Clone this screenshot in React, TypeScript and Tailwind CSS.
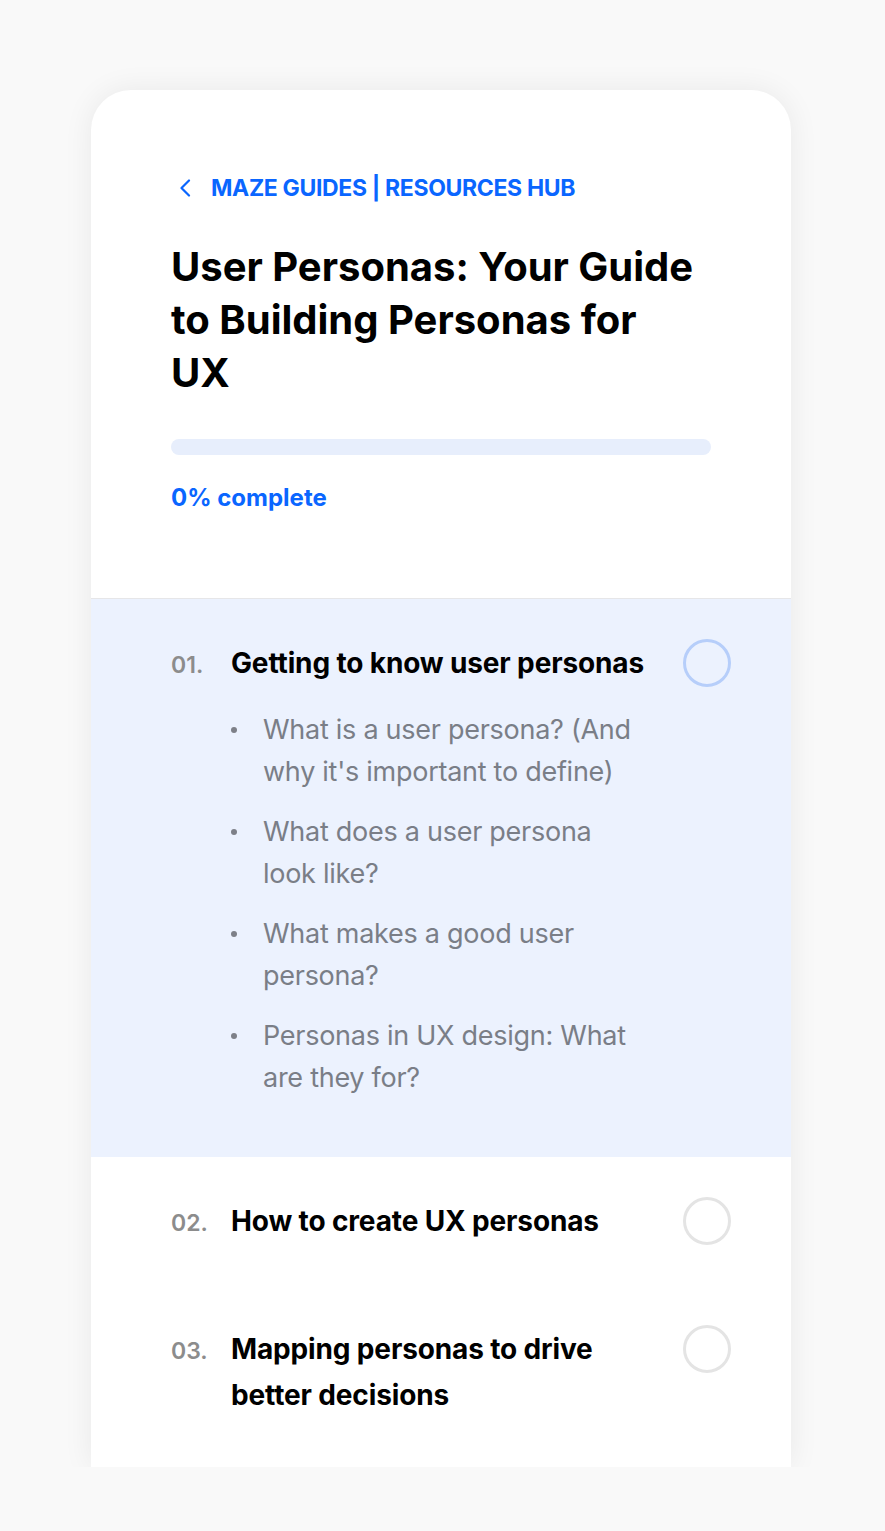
import React from "react";

type Chapter = {
  num: string;
  title: string[];
  active?: boolean;
  topics?: string[][];
};

const chapters: Chapter[] = [
  {
    num: "01.",
    title: ["Getting to know user personas"],
    active: true,
    topics: [
      ["What is a user persona? (And", "why it's important to define)"],
      ["What does a user persona", "look like?"],
      ["What makes a good user", "persona?"],
      ["Personas in UX design: What", "are they for?"],
    ],
  },
  { num: "02.", title: ["How to create UX personas"] },
  { num: "03.", title: ["Mapping personas to drive", "better decisions"] },
];

function ChapterRow({ chapter }: { chapter: Chapter }) {
  return (
    <div
      className={
        chapter.active
          ? "bg-[#ecf2fe] pb-[58px] pl-20 pr-[60px] pt-10"
          : "bg-white pb-10 pl-20 pr-[60px] pt-10"
      }
    >
      <div className="flex items-start">
        <div className="flex flex-1 items-baseline pt-[1px]">
          <span className="w-[60px] shrink-0 text-[23px] font-semibold text-[#8c8c8c]">{chapter.num}</span>
          <h3 className="whitespace-nowrap text-[28px] font-bold leading-[46px] tracking-[-0.005em] text-black">
            {chapter.title.map((line, i) => (
              <React.Fragment key={i}>
                {i > 0 && <br />}
                {line}
              </React.Fragment>
            ))}
          </h3>
        </div>
        <span
          className={
            chapter.active
              ? "h-12 w-12 shrink-0 rounded-full border-[3px] border-[#b6cefa]"
              : "h-12 w-12 shrink-0 rounded-full border-[3px] border-[#e4e4e4]"
          }
        />
      </div>
      {chapter.topics && (
        <ul className="ml-[60px] mt-[22px] flex flex-col gap-[18px]">
          {chapter.topics.map((t, i) => (
            <li key={i} className="flex">
              <span className="flex h-[42px] w-8 shrink-0 items-center">
                <span className="h-[6px] w-[6px] rounded-full bg-[#7d8088]" />
              </span>
              <span className="whitespace-nowrap text-[27px] leading-[42px] tracking-[-0.01em] text-[#7a7e87]">
                {t[0]}
                <br />
                {t[1]}
              </span>
            </li>
          ))}
        </ul>
      )}
    </div>
  );
}

export default function App() {
  return (
    <main className="min-h-screen bg-[#f9f9f9] p-16 font-['Inter','Noto_Sans',sans-serif]">
      <div className="h-[1403px] overflow-hidden pl-[27px] pr-[30px] pt-[26px]">
        <section className="h-full rounded-t-[40px] bg-white shadow-[0_0_30px_rgba(0,0,0,0.07)]">
          <div className="border-b border-[#e6e6e8] px-20 pb-[85px] pt-[84px]">
            <a href="#" className="flex h-7 items-center text-[#0a66ff]">
              <svg width="12" height="18" viewBox="0 0 12 18" className="ml-[8px]" fill="none">
                <path d="M10 1.5 2.5 9l7.5 7.5" stroke="currentColor" strokeWidth="2.2" strokeLinecap="round" strokeLinejoin="round" />
              </svg>
              <span className="ml-[20px] text-[23px] font-bold tracking-[-0.015em]">MAZE GUIDES | RESOURCES HUB</span>
            </a>
            <h1 className="mt-[38px] text-[40px] font-bold leading-[53px] text-black">
              User Personas: Your Guide
              <br />
              to Building Personas for
              <br />
              UX
            </h1>
            <div className="mt-10 h-4 rounded-full bg-[#e7eefc]" />
            <p className="mt-[28px] text-[24px] font-bold leading-[30px] text-[#0a66ff]">0% complete</p>
          </div>
          {chapters.map((c) => (
            <ChapterRow key={c.num} chapter={c} />
          ))}
        </section>
      </div>
    </main>
  );
}
